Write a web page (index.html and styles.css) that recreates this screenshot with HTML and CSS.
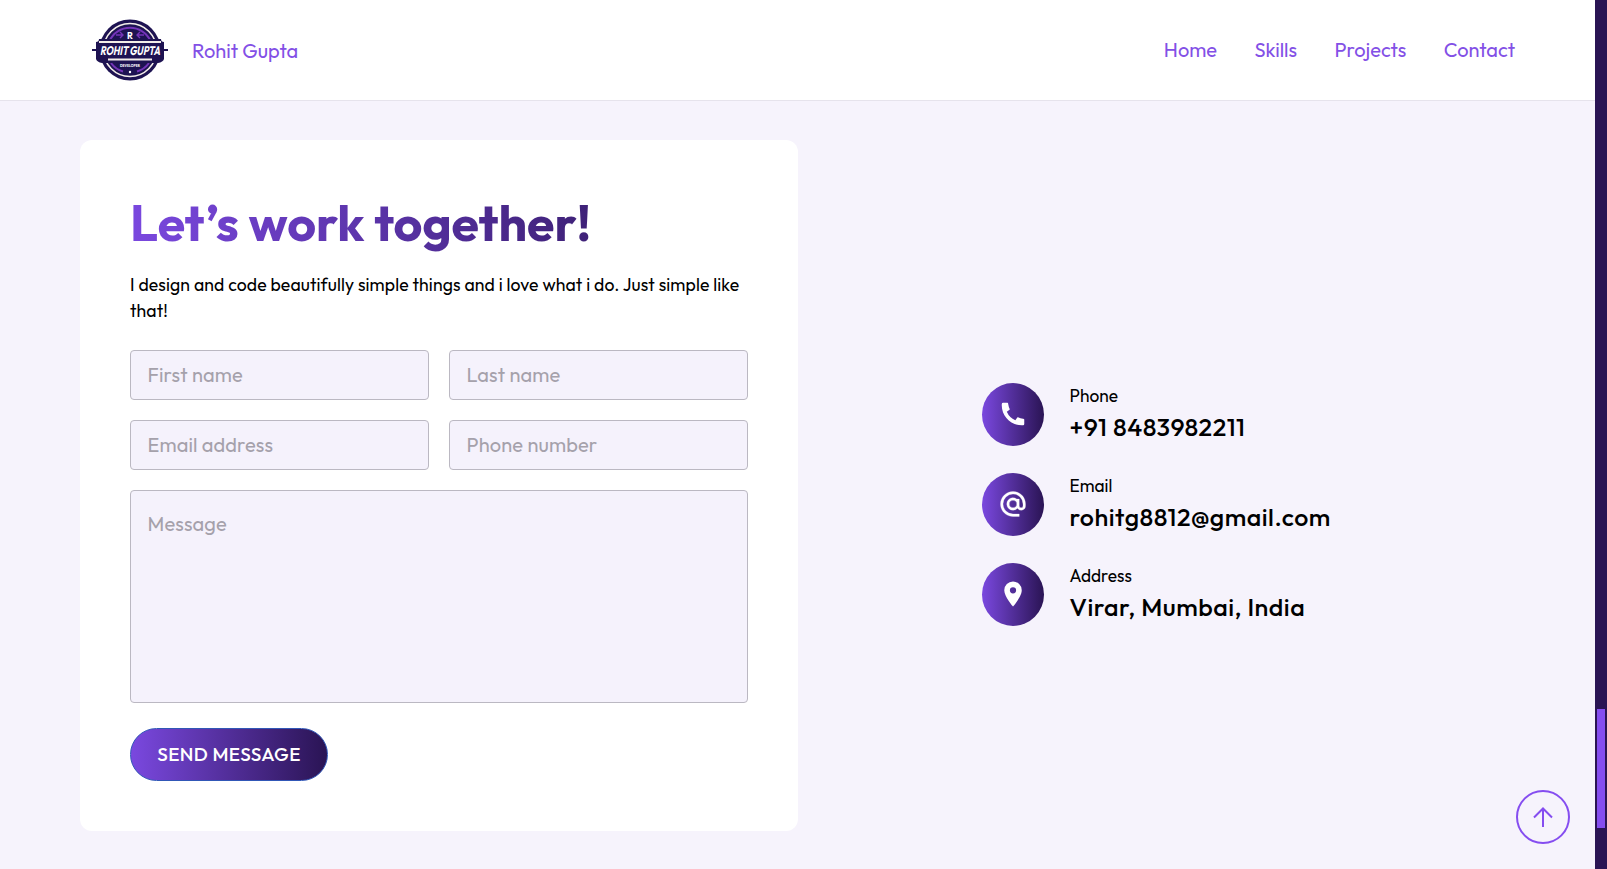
FILE: index.html
```html
<!DOCTYPE html>
<html lang="en">
<head>
<meta charset="utf-8">
<title>Rohit Gupta</title>
<link rel="stylesheet" href="styles.css">
</head>
<body>
<div class="page">
  <header class="header">
    <a class="brand">
      <svg class="logo" viewBox="0 0 78 64" width="78" height="64">
        <circle cx="39" cy="32" r="30.5" fill="#1e1352"/>
        <circle cx="39" cy="32" r="26.5" fill="none" stroke="#f3eee9" stroke-width="1.6"/>
        <path d="M18.500 23A22.500 22.500 0 0 1 59.500 23M20 45A22.500 22.500 0 0 0 32 53.500M58 45A22.500 22.500 0 0 1 46 53.500" fill="none" stroke="#7434b8" stroke-width="2"/>
        <path d="M1 32h76" stroke="#1e1352" stroke-width="2"/>
        <path d="M8 21h62q0 3 3 3v17q-1 3-6 4H11q-5-1-6-4V24q3 0 3-3z" fill="#1e1352"/>
        <path d="M8 24h62M17 41.500h44" stroke="#f3eee9" stroke-width="1.800"/>
        <path d="M25 17h7M29 14l3 3-3 3M53 17h-7M49 14l-3 3 3 3" fill="none" stroke="#7434b8" stroke-width="1.400"/>
        <text class="logo-initial" x="39" y="20.500">R</text>
        <text class="logo-name" x="39" y="37" textLength="60" lengthAdjust="spacingAndGlyphs">ROHIT GUPTA</text>
        <text class="logo-role" x="39" y="48.500" textLength="20" lengthAdjust="spacingAndGlyphs">DEVELOPER</text>
        <circle cx="39" cy="54" r="1.200" fill="#fff"/>
      </svg>
      <span class="brand-name">Rohit Gupta</span>
    </a>
    <nav class="nav">
      <a>Home</a><a>Skills</a><a>Projects</a><a>Contact</a>
    </nav>
  </header>
  <main class="main">
    <section class="card">
      <h1 class="title">Let’s work together!</h1>
      <p class="intro">I design and code beautifully simple things and i love what i do. Just simple like<br>that!</p>
      <form class="form">
        <input class="field" placeholder="First name">
        <input class="field" placeholder="Last name">
        <input class="field" placeholder="Email address">
        <input class="field" placeholder="Phone number">
        <textarea class="field message" placeholder="Message"></textarea>
      </form>
      <button class="send">SEND MESSAGE</button>
    </section>
    <section class="details">
      <div class="detail">
        <span class="bubble"><svg viewBox="0 0 24 24" width="30" height="30"><path d="M21 16.420v3.536a1 1 0 0 1-.93.998c-.437.030-.794.046-1.070.046-8.837 0-16-7.163-16-16 0-.276.015-.633.046-1.070A1 1 0 0 1 4.044 3H7.580a.5.5 0 0 1 .498.450c.023.230.044.413.064.552A13.900 13.900 0 0 0 9.350 8.003c.095.200.033.439-.147.567l-2.158 1.542a13.050 13.050 0 0 0 6.844 6.844l1.540-2.154a.462.462 0 0 1 .573-.149 13.900 13.900 0 0 0 4 1.205c.139.020.322.042.55.064a.5.5 0 0 1 .449.498z"/></svg></span>
        <div class="detail-text"><p class="label">Phone</p><p class="value">+91 8483982211</p></div>
      </div>
      <div class="detail">
        <span class="bubble"><svg class="at" viewBox="0 0 24 24" width="30" height="30"><path d="M20 12a8 8 0 1 0-8 8h5v2h-5C6.477 22 2 17.523 2 12S6.477 2 12 2s10 4.477 10 10v1.500a3.500 3.500 0 0 1-6.396 1.966A5 5 0 1 1 15 8h2v5.500a1.500 1.500 0 0 0 3 0V12zm-8-3a3 3 0 1 0 0 6 3 3 0 0 0 0-6z"/></svg></span>
        <div class="detail-text"><p class="label">Email</p><p class="value">rohitg8812@gmail.com</p></div>
      </div>
      <div class="detail">
        <span class="bubble"><svg viewBox="0 0 24 24" width="30" height="30"><path d="M12 2a7 7 0 0 0-7 7c0 5.250 7 13 7 13s7-7.750 7-13a7 7 0 0 0-7-7zm0 9.500a2.500 2.500 0 1 1 0-5 2.500 2.500 0 0 1 0 5z"/></svg></span>
        <div class="detail-text"><p class="label">Address</p><p class="value">Virar, Mumbai, India</p></div>
      </div>
    </section>
  </main>
</div>
<aside class="track"><div class="thumb"></div></aside>
<a class="to-top"><svg viewBox="0 0 54 54" width="54" height="54"><circle cx="27" cy="27" r="26"/><path d="M27 37V18.500M18 27.500l9-9 9 9"/></svg></a>
</body>
</html>
```

FILE: styles.css
```css
* { box-sizing: border-box; }
body {
  margin: 0;
  height: 869px;
  display: flex;
  overflow: hidden;
  background: #f6f3fc;
  color: #000;
  font-family: Outfit, Lato, sans-serif;
  font-weight: 400;
}
h1, p { margin: 0; white-space: nowrap; }
.page { flex: 1; }
.header {
  height: 101px;
  padding: 0 80px 0 91px;
  display: flex;
  align-items: center;
  justify-content: space-between;
  background: #fff;
  border-bottom: 1px solid #e6e3ec;
  color: #8350e6;
  font-size: 20px;
}
.brand { display: flex; align-items: center; gap: 23px; }
.logo { overflow: visible; font-family: Outfit, Lato, sans-serif; font-weight: 700; fill: #fff; text-anchor: middle; }
.logo-initial { font-size: 9px; }
.logo-name { font-size: 12.500px; font-style: italic; }
.logo-role { font-size: 4.500px; }
.nav { display: flex; gap: 37.400px; padding-bottom: 2px; }
.main { display: flex; padding: 39px 80px 0; }
.card {
  width: 718px;
  height: 691px;
  padding: 50px;
  border-radius: 12px;
  background: #fff;
}
.title {
  height: 66px;
  line-height: 66px;
  font-size: 50px;
  font-weight: 700;
  background: linear-gradient(to right, #7a48df, #2a1454);
  -webkit-background-clip: text;
  background-clip: text;
  color: transparent;
}
.intro { margin-top: 16px; font-size: 17.600px; line-height: 26px; letter-spacing: 0.120px; }
.form {
  margin-top: 26px;
  display: grid;
  grid-template-columns: 299px 299px;
  gap: 20px;
}
.field {
  width: 100%;
  height: 50px;
  padding: 0 16px 2px 16.500px;
  border: 1px solid #bbb8c2;
  border-radius: 4px;
  background: #f5f2fc;
  font: 400 20px Outfit, Lato, sans-serif;
  letter-spacing: 0.120px;
}
.field::placeholder { color: #a5a1ab; }
.message { grid-column: 1 / 3; height: 213px; padding-top: 20px; resize: none; display: block; }
.send {
  display: block;
  margin-top: 25px;
  width: 198px;
  height: 53px;
  padding: 0 0 2px;
  border: 1px solid #3157b7;
  border-radius: 27px;
  background: linear-gradient(to right, #7a48df, #2a1454);
  color: #fff;
  font: 500 19px Outfit, Lato, sans-serif;
  letter-spacing: 0.400px;
  white-space: nowrap;
}
.details { margin: 243px 0 0 184px; display: flex; flex-direction: column; gap: 27px; }
.detail { height: 63px; display: flex; gap: 25.500px; }
.bubble {
  width: 62px;
  height: 63px;
  padding-bottom: 1px;
  border-radius: 50%;
  display: flex;
  align-items: center;
  justify-content: center;
  background: linear-gradient(to right, #7a48df, #2a1454);
}
.bubble svg { fill: #fff; }
.at { stroke: #fff; stroke-width: 0.200; }
.label { font-size: 17.300px; line-height: 26px; }
.value { font-size: 25px; line-height: 37px; font-weight: 500; letter-spacing: 0.500px; }
.track { width: 12px; padding: 709px 2px 0; background: #2a1454; }
.thumb { height: 119px; background: #854df0; }
.to-top { position: absolute; left: 1516px; top: 790px; height: 54px; }
.to-top svg { fill: none; stroke: #854df0; stroke-width: 2; }
```
